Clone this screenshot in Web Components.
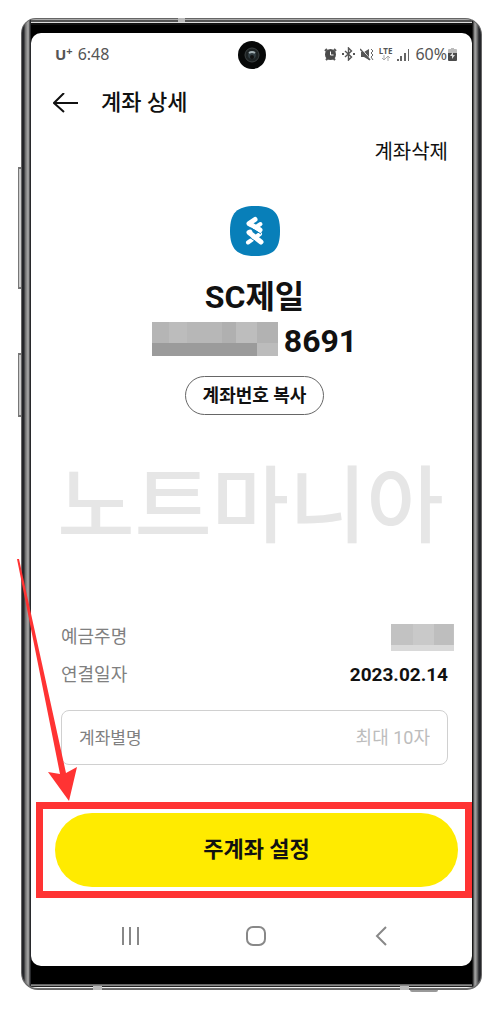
<!DOCTYPE html>
<html lang="ko">
<head>
<meta charset="utf-8">
<meta name="viewport" content="width=device-width, initial-scale=1">
<title>계좌 상세</title>
<style>
  body {
    margin: 0;
    padding: 18px 18px 19px 21px;
    background: #fff;
    color: #111;
    font-family: Roboto, 'Noto Sans CJK KR', sans-serif;
  }
</style>
</head>
<body>
<phone-frame>
  <status-bar time="6:48" battery="60%"></status-bar>
  <page-header titulo="계좌 상세" action="계좌삭제"></page-header>
  <account-summary bank="SC제일" number="8691">계좌번호 복사</account-summary>
  <water-mark>노트마니아</water-mark>
  <detail-row label="예금주명"><pixel-mask kind="name"></pixel-mask></detail-row>
  <detail-row label="연결일자">2023.02.14</detail-row>
  <alias-field label="계좌별명" hint="최대 10자"></alias-field>
  <main-action>주계좌 설정</main-action>
  <nav-bar></nav-bar>
</phone-frame>

<script>
// Base: each element only provides its own template
class BaseElement extends HTMLElement {
  constructor() {
    super();
    this.attachShadow({ mode: 'open' });
  }
  connectedCallback() {
    this.shadowRoot.innerHTML = `<style>* { box-sizing: border-box; }</style>${this.template()}`;
  }
  attr(name) { return this.getAttribute(name) || ''; }
}

// Phone body: metal sides, bezels, camera and side keys
class PhoneFrame extends BaseElement {
  template() {
    return `
      <style>
        :host {
          display: block;
          position: relative;
          padding: 15px 10px 24px;
          border-radius: 15px 17px 15px 17px;
          background:
            linear-gradient(#555 0 1px, #aaa 1px 2px, #555 2px 4px, #ddd 4px 5px, #111 5px 7px, #000 7px 100%) 10px 0 / calc(100% - 20px) 17px no-repeat,
            linear-gradient(#000 0, #000 18px, #555 18px, #999 20px, #222 20px 21px, #fff 21px 22px, #222 22px 23px, #888 24px) 10px 100% / calc(100% - 20px) 24px no-repeat,
            linear-gradient(90deg, #777 0 1px, #25262a 1px 3px, #666 4px, #aaa 7px, #888 8px, #28292c 9px 10px,
              #000 10px calc(100% - 10px), #333 calc(100% - 9px), #aaa calc(100% - 7px), #777 calc(100% - 5px), #25262a calc(100% - 3px) calc(100% - 1px), #888 100%);
          box-shadow: inset 0 0 0 1px #666, inset 0 -2px 1px #777;
        }
        .screen {
          display: flex;
          flex-direction: column;
          background: #fff;
          border-radius: 10px;
        }
        .key {
          position: absolute;
          left: -3px;
          width: 3px;
          border: 1px solid #777;
          border-width: 2px 0 2px 1px;
          background: #ccc;
        }
        .volume { top: 149px; height: 122px; }
        .power { top: 335px; height: 64px; }
        .band { position: absolute; height: 4px; background: #bbb; }
        .b1 { top: 0; left: 157px; width: 7px; }
        .b2 { bottom: 0; left: 72px; width: 9px; }
        .b3 { bottom: 0; right: 73px; width: 9px; }
        .stand { position: absolute; right: 44px; bottom: -2px; width: 28px; height: 2px; background: #999; border-radius: 0 0 14px 14px; }
        .camera {
          position: absolute;
          top: 23px;
          left: 50%;
          margin-left: -14px;
        }
      </style>
      <div class="screen"><slot></slot></div>
      <i class="key volume"></i><i class="key power"></i>
      <i class="band b1"></i><i class="band b2"></i><i class="band b3"></i><i class="stand"></i>
      <svg class="camera" width="28" height="28" viewBox="0 0 28 28">
        <circle cx="14" cy="14" r="14" fill="#070808"/>
        <circle cx="14" cy="14" r="7" fill="#1d2223" stroke="#3c4142"/>
        <circle cx="14" cy="14" r="4" fill="#303b40"/>
        <path d="M11 12q3-2 6 0" stroke="#a4b0b4" stroke-width="2" fill="none"/>
        <circle cx="14" cy="16" r="2" fill="#111"/>
      </svg>`;
  }
}

class StatusBar extends BaseElement {
  template() {
    return `
      <style>
        :host {
          display: flex;
          justify-content: space-between;
          align-items: center;
          height: 42px;
          padding: 0 15px 0 24px;
          color: #555;
          font: 16px/20px 'Noto Sans', sans-serif;
        }
        div { display: flex; align-items: center; }
        .carrier { font: bold 15px/20px 'Noto Sans', sans-serif; margin-right: 5px; }
        sup { font-size: 11px; line-height: 0; vertical-align: 5px; }
        .icons { gap: 5px; }
        .lte { display: flex; flex-direction: column; align-items: center; font: bold 8px/8px 'Open Sans', sans-serif; }
        .charge { display: flex; gap: 1px; align-items: center; }
        svg { display: block; }
      </style>
      <div><span class="carrier">U<sup>+</sup></span><span>${this.attr('time')}</span></div>
      <div class="icons">
        <svg width="13" height="13" viewBox="0 0 13 13">
          <path d="M1 3l2-2M12 3l-2-2M2 12l2-2M11 12L9 10" stroke="#555" stroke-width="2"/>
          <circle cx="6.500" cy="6.500" r="5.500" fill="#4b4b4b"/>
          <path d="M6.500 3.500v3.500h3" stroke="#fff" fill="none"/>
        </svg>
        <svg width="13" height="14" viewBox="0 0 13 14" fill="none" stroke="#555" stroke-width="1.400">
          <path d="M3 4l6.500 6L6.500 13V1l3 3L3 10"/>
          <path d="M0 7h2M11 7h2" stroke-width="2"/>
        </svg>
        <svg width="14" height="13" viewBox="0 0 14 13">
          <path d="M1 4h3l5-3v11l-5-3H1z" fill="#555"/>
          <path d="M1 0l9 11" stroke="#fff"/>
          <path d="M0 1l10 11" stroke="#555" stroke-width="1.500"/>
          <path d="M11 1l2 2-2 2 2 2-2 2 2 3" stroke="#666" fill="none"/>
        </svg>
        <span class="lte">LTE
          <svg width="10" height="6" viewBox="0 0 10 6" fill="none" stroke="#aaa"><path d="M3 0v5M1 3l2 2 2-2M7 6V1M5 3l2-2 2 2"/></svg>
        </span>
        <svg width="13" height="13" viewBox="0 0 13 13" fill="#666">
          <path d="M0 11h2v2H0zM3 8h2v5H3zM7 5h2v8H7zM11 1h1v12h-1z"/>
        </svg>
        <span class="charge">${this.attr('battery')}
          <svg width="9" height="13" viewBox="0 0 9 13">
            <path d="M3 0h3v1h2q1 0 1 1v3H0V2q0-1 1-1h2z" fill="#bbb"/>
            <path d="M0 5h9v7q0 1-1 1H1q-1 0-1-1z" fill="#4b4b4b"/>
            <path d="M5 4L2 8h2v3l3-4H5z" fill="#ddd"/>
          </svg>
        </span>
      </div>`;
  }
}

class PageHeader extends BaseElement {
  template() {
    return `
      <style>
        :host { display: block; padding: 10px 24px 0 22px; }
        .bar { display: flex; align-items: center; gap: 22px; height: 36px; }
        h1 { margin: 0; font-size: 22px; line-height: 32px; font-weight: 500; }
        button { border: 0; padding: 0; background: none; font: inherit; color: inherit; }
        .remove { display: block; margin: 16px 0 0 auto; font-size: 20px; line-height: 30px; }
        svg { display: block; }
      </style>
      <div class="bar">
        <button aria-label="뒤로">
          <svg width="26" height="20" viewBox="0 0 26 20" fill="none" stroke="#111" stroke-width="2"><path d="M25 10H1M11 0L1 10l10 9"/></svg>
        </button>
        <h1>${this.attr('titulo')}</h1>
      </div>
      <button class="remove">${this.attr('action')}</button>`;
  }
}

// Pixelated block that hides private data
class PixelMask extends BaseElement {
  template() {
    const name = this.attr('kind') === 'name';
    return name ? `
      <style>:host { display: block; margin-right: -6px; } svg { display: block; }</style>
      <svg width="63" height="27" viewBox="0 0 63 27">
        <path d="M0 0h63v27H0z" fill="#d9d9d9"/><path d="M0 0h63v21H0z" fill="#c2c2c2"/>
        <path d="M22 0h21v21H22z" fill="#c9c9c9"/><path d="M43 0h19v21H43z" fill="#bebebe"/>
      </svg>` : `
      <style>:host { display: block; } svg { display: block; }</style>
      <svg width="126" height="34" viewBox="0 0 126 34">
        <path d="M0 0h126v34H0z" fill="#b5b5b5"/>
        <path d="M17 0h18v21H17z" fill="#bcbcbc"/><path d="M35 0h35v21H35z" fill="#b7b7b7"/>
        <path d="M70 0h14v21H70z" fill="#b0b0b0"/><path d="M84 0h21v21H84z" fill="#bdbdbd"/>
        <path d="M105 0h21v21h-21z" fill="#b2b2b2"/><path d="M0 21h105v13H0z" fill="#9b9b9b"/>
        <path d="M105 21h21v13h-21z" fill="#bcbcbc"/>
      </svg>`;
  }
}

class AccountSummary extends BaseElement {
  template() {
    return `
      <style>
        :host { display: flex; flex-direction: column; align-items: center; padding: 39px 0 0 6px; }
        h2 { margin: 19px 0 0; font-size: 32px; line-height: 44px; font-weight: 700; }
        .number { display: flex; align-items: center; gap: 6px; font-size: 32px; line-height: 44px; font-weight: 700; }
        .number pixel-mask { margin-top: -4px; }
        button {
          height: 39px;
          margin-top: 13px;
          padding: 0 17px;
          border: 1px solid #666;
          border-radius: 20px;
          background: #fff;
          color: inherit;
          font: bold 18px/26px Roboto, 'Noto Sans CJK KR', sans-serif;
        }
      </style>
      <svg width="50" height="50" viewBox="0 0 50 50">
        <path d="M25 0C43 0 50 6 50 25S43 50 25 50 0 43 0 25 7 0 25 0z" fill="#087fb9"/>
        <g fill="none" stroke="#fff" stroke-width="5" stroke-linecap="round" stroke-linejoin="round">
          <path d="M25 13.500l-6 4 11 6.500"/>
          <path d="M30.500 18l-3 2" stroke-width="4"/>
          <path d="M30 28L18 36.500" stroke-width="4"/>
          <path d="M20 26l-1 .500 12 9.500"/>
        </g>
        <path d="M17 23l4-1 10 6M19 31l6 4" fill="none" stroke="#087fb9" stroke-width="1"/>
      </svg>
      <h2>${this.attr('bank')}</h2>
      <div class="number"><pixel-mask></pixel-mask><span>${this.attr('number')}</span></div>
      <button><slot></slot></button>`;
  }
}

class WaterMark extends BaseElement {
  template() {
    return `
      <style>
        :host {
          display: block;
          padding: 26px 2px 59px 0;
          color: #e6e6e6;
          font: 500 84px/118px 'Noto Sans CJK KR', sans-serif;
          text-align: center;
          white-space: nowrap;
        }
      </style>
      <slot></slot>`;
  }
}

class DetailRow extends BaseElement {
  template() {
    return `
      <style>
        :host {
          display: flex;
          justify-content: space-between;
          align-items: center;
          height: 38px;
          padding: 0 24px 0 30px;
          font-size: 18px;
          line-height: 26px;
        }
        .label { color: #808080; }
        .value { font-size: 19px; font-weight: 700; }
      </style>
      <span class="label">${this.attr('label')}</span>
      <span class="value"><slot></slot></span>`;
  }
}

class AliasField extends BaseElement {
  template() {
    return `
      <style>
        :host {
          display: flex;
          align-items: center;
          height: 55px;
          margin: 16px 24px 37px 30px;
          padding: 0 17px;
          border: 1px solid #d0d0d0;
          border-radius: 8px;
          box-sizing: border-box;
        }
        label { color: #808080; font-size: 17px; line-height: 26px; }
        input {
          flex: 1;
          min-width: 0;
          border: 0;
          padding: 0;
          background: none;
          text-align: right;
          font: 18px/26px Roboto, 'Noto Sans CJK KR', sans-serif;
        }
        input::placeholder { color: #bdbdbd; }
      </style>
      <label for="alias">${this.attr('label')}</label>
      <input id="alias" type="text" maxlength="10" placeholder="${this.attr('hint')}">`;
  }
}

// Main button with the red marker and the arrow that points at it
class MainAction extends BaseElement {
  template() {
    return `
      <style>
        :host {
          display: block;
          position: relative;
          margin-left: 5px;
          padding: 4px 7px 4px 12px;
          border: 7px solid #ff3333;
        }
        button {
          display: block;
          width: 100%;
          height: 74px;
          border: 0;
          border-radius: 37px;
          background: #ffeb00;
          color: #111;
          font: bold 22px/32px Roboto, 'Noto Sans CJK KR', sans-serif;
        }
        svg { position: absolute; left: -26px; bottom: 90px; pointer-events: none; }
      </style>
      <button><slot></slot></button>
      <svg width="62" height="243" viewBox="0 0 62 243">
        <path d="M0 1h2L49 215l11-6-8 34-21-29 12 2z" fill="#ff3333"/>
      </svg>`;
  }
}

class NavBar extends BaseElement {
  template() {
    return `
      <style>
        :host { display: flex; justify-content: space-between; align-items: center; box-sizing: border-box; height: 68px; padding: 8px 80px 0 88px; }
        button { border: 0; padding: 0; background: none; }
        svg { display: block; }
      </style>
      <button aria-label="최근 앱"><svg width="22" height="20" viewBox="0 0 22 20" stroke="#888" stroke-width="2"><path d="M4 1v18M11 1v18M19 1v18"/></svg></button>
      <button aria-label="홈"><svg width="22" height="20" viewBox="0 0 22 20" fill="none" stroke="#888" stroke-width="2"><rect x="2" y="1" width="18" height="18" rx="6"/></svg></button>
      <button aria-label="뒤로"><svg width="22" height="20" viewBox="0 0 22 20" fill="none" stroke="#888" stroke-width="2"><path d="M16 1L7 10l9 9"/></svg></button>`;
  }
}

customElements.define('phone-frame', PhoneFrame);
customElements.define('status-bar', StatusBar);
customElements.define('page-header', PageHeader);
customElements.define('pixel-mask', PixelMask);
customElements.define('account-summary', AccountSummary);
customElements.define('water-mark', WaterMark);
customElements.define('detail-row', DetailRow);
customElements.define('alias-field', AliasField);
customElements.define('main-action', MainAction);
customElements.define('nav-bar', NavBar);
</script>
</body>
</html>
